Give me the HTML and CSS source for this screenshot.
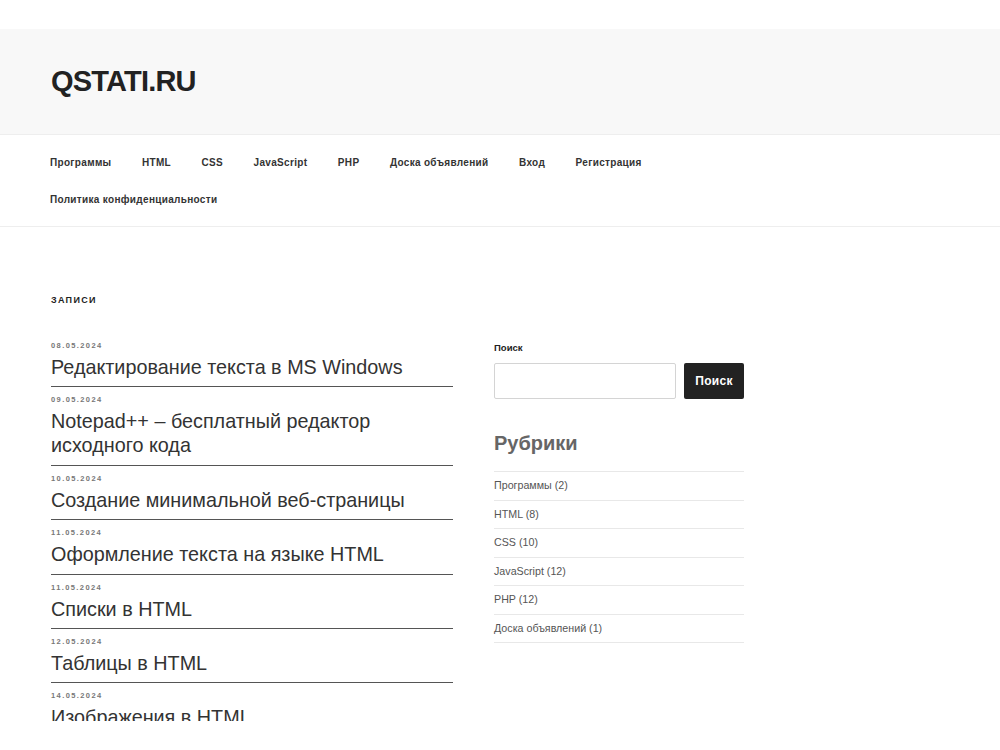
FILE: index.html
```html
<!DOCTYPE html>
<html lang="ru">
<head>
<meta charset="utf-8">
<title>QSTATI.RU</title>
<link rel="stylesheet" href="styles.css">
</head>
<body>
<div class="page">
  <header class="masthead">
    <div class="site-title">QSTATI.RU</div>
  </header>
  <nav class="nav">
    <ul class="menu">
      <li>Программы</li>
      <li>HTML</li>
      <li>CSS</li>
      <li>JavaScript</li>
      <li>PHP</li>
      <li>Доска объявлений</li>
      <li>Вход</li>
      <li>Регистрация</li>
      <li>Политика конфиденциальности</li>
    </ul>
  </nav>
  <main class="content">
    <h2 class="page-title">Записи</h2>
    <div class="columns">
      <div class="posts">
        <article class="post"><div class="date">08.05.2024</div><h3 class="post-title">Редактирование текста в MS Windows</h3></article>
        <article class="post"><div class="date">09.05.2024</div><h3 class="post-title">Notepad++ – бесплатный редактор исходного кода</h3></article>
        <article class="post"><div class="date">10.05.2024</div><h3 class="post-title">Создание минимальной веб-страницы</h3></article>
        <article class="post"><div class="date">11.05.2024</div><h3 class="post-title">Оформление текста на языке HTML</h3></article>
        <article class="post"><div class="date">11.05.2024</div><h3 class="post-title">Списки в HTML</h3></article>
        <article class="post"><div class="date">12.05.2024</div><h3 class="post-title">Таблицы в HTML</h3></article>
        <article class="post"><div class="date">14.05.2024</div><h3 class="post-title">Изображения в HTML</h3></article>
      </div>
      <aside class="sidebar">
        <div class="search-label">Поиск</div>
        <form class="search">
          <input class="search-input" type="text">
          <button class="search-btn" type="button">Поиск</button>
        </form>
        <h2 class="widget-title">Рубрики</h2>
        <ul class="cats">
          <li>Программы (2)</li>
          <li>HTML (8)</li>
          <li>CSS (10)</li>
          <li>JavaScript (12)</li>
          <li>PHP (12)</li>
          <li>Доска объявлений (1)</li>
        </ul>
      </aside>
    </div>
  </main>
</div>
</body>
</html>
```
FILE: styles.css
```css
* { box-sizing: border-box; }
html, body { margin: 0; padding: 0; background: #fff; }
body {
  font-family: "Liberation Sans", Arial, sans-serif;
  color: #333;
}
.page {
  height: 721px;
  overflow: hidden;
  padding-top: 29px;
}
.masthead {
  background: #f8f8f8;
  height: 106px;
  border-bottom: 1px solid #eeeeee;
  display: flex;
  align-items: center;
  padding-left: 51px;
}
.site-title {
  font-size: 29px;
  font-weight: bold;
  color: #222;
  letter-spacing: -0.8px;
  line-height: 1;
}
.nav {
  padding: 9px 0 8px 50px;
  border-bottom: 1px solid #eeeeee;
}
.menu {
  list-style: none;
  margin: 0;
  padding: 0;
  display: flex;
  flex-wrap: wrap;
  width: 640px;
  column-gap: 30.5px;
}
.menu li {
  font-size: 10px;
  font-weight: bold;
  letter-spacing: 0.32px;
  color: #333;
  line-height: 37px;
}
.content {
  padding: 67px 0 0 51px;
}
.page-title {
  margin: 0;
  font-size: 9px;
  font-weight: bold;
  text-transform: uppercase;
  letter-spacing: 1.3px;
  line-height: 12px;
  color: #222;
}
.columns {
  display: flex;
  gap: 41px;
  margin-top: 27px;
}
.posts {
  width: 402px;
}
.post {
  padding: 8px 0 7.4px 0;
  border-bottom: 1px solid #555;
}
.date {
  font-size: 7.5px;
  font-weight: bold;
  letter-spacing: 1.4px;
  line-height: 10px;
  color: #777;
}
.post-title {
  margin: 4px 0 0 0;
  font-size: 19.8px;
  font-weight: normal;
  line-height: 24px;
  color: #333;
}
.sidebar {
  width: 250px;
  padding-top: 9px;
}
.search-label {
  font-size: 9.5px;
  font-weight: bold;
  line-height: 12px;
  color: #222;
}
.search {
  display: flex;
  gap: 8px;
  margin-top: 9px;
}
.search-input {
  width: 182px;
  height: 36px;
  border: 1px solid #d4d4d4;
  border-radius: 2px;
  background: #fff;
  margin: 0;
}
.search-btn {
  width: 60px;
  height: 36px;
  border: none;
  border-radius: 2px;
  background: #222;
  color: #fff;
  font-family: "Liberation Sans", Arial, sans-serif;
  font-size: 12px;
  font-weight: bold;
  letter-spacing: 0.3px;
  padding: 0;
  margin: 0;
}
.widget-title {
  margin: 32px 0 0 0;
  font-size: 20px;
  font-weight: bold;
  line-height: 24px;
  color: #666;
}
.cats {
  list-style: none;
  margin: 16px 0 0 0;
  padding: 0;
  border-top: 1px solid #e8e8e8;
}
.cats li {
  font-size: 10.7px;
  color: #555;
  line-height: 11.5px;
  padding: 8px 0;
  border-bottom: 1px solid #e8e8e8;
}
```
